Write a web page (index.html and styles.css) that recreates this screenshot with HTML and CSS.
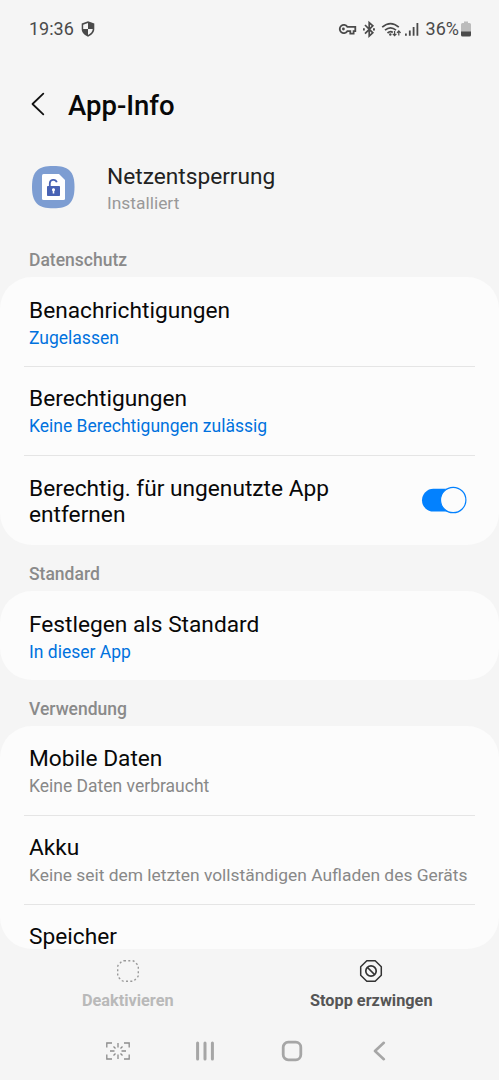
FILE: index.html
```html
<!DOCTYPE html>
<html lang="de">
<head>
<meta charset="utf-8">
<title>App-Info</title>
<link rel="stylesheet" href="styles.css">
</head>
<body>
<div class="screen">
  <header class="status">
    <span class="clock">19:36</span>
    <svg class="shield" width="14" height="16" viewBox="0 0 14 16"><path d="M7 .3 13.300 2.600V8c0 3.500-2.600 6.200-6.300 7.700C3.300 14.200.7 11.500.7 8V2.600Z" fill="#4a4a4a"/><path d="M7 2v6H2.200V3.700ZM7 8h4.800c-.3 2.500-2 4.700-4.800 6Z" fill="#f5f5f5"/></svg>
    <svg class="indicators" width="84" height="20" viewBox="0 0 84 20" fill="none" stroke="#4a4a4a">
      <path d="M9.300 7.800A4.100 4.100 0 1 0 9.300 12.200H12.300V14.600H15.600V12.200H17.300V7.800Z" stroke-width="1.800"/><circle cx="5.400" cy="10" r="1.400" fill="#4a4a4a" stroke="none"/>
      <path d="M27 6 34.800 13.800 31.200 17.100V3.700L34.800 6.900 27 14.700" stroke-width="1.700"/><path d="M25 10.300h1.800M35 10.300h1.900" stroke-width="2.200"/>
      <path d="M44.200 8.100Q52.500 1 60.800 8.100M47 11.100Q52.500 6.500 58 11.100M49.500 14Q52.500 11.500 54.800 13.500" stroke-width="1.700"/><circle cx="52.300" cy="15.500" r="1.200" fill="#4a4a4a" stroke="none"/><path d="M56.600 12v4.500M54.800 14.800l1.800 1.900 1.800-1.900M60.800 16.500V12M59 13.800l1.800-1.900 1.800 1.900" stroke-width="1.200"/>
      <path d="M67.900 14.500v2.200M71.800 11.500v5.200M75.600 8v8.700M79.400 4v12.700" stroke-width="1.800"/>
    </svg>
    <span class="percent">36%</span>
    <svg class="battery" width="10" height="16" viewBox="0 0 10 16"><path d="M3 .5h4V2h1.500q1.500 0 1.500 1.500V11H0V3.500Q0 2 1.500 2H3Z" fill="#bcbcbc"/><path d="M0 10.500h10V14q0 1.500-1.500 1.500h-7Q0 15.500 0 14Z" fill="#4a4a4a"/></svg>
  </header>

  <div class="titlebar">
    <svg width="14" height="24" viewBox="0 0 14 24"><path d="M12.300 1.700 1.500 12 12.300 22.300" fill="none" stroke="#111" stroke-width="1.800" stroke-linecap="round" stroke-linejoin="round"/></svg>
    <h1>App-Info</h1>
  </div>

  <section class="app">
    <svg width="44" height="44" viewBox="0 0 44 44"><path d="M22.300 1C37.800 1 43.500 6.500 43.500 22S37.800 43.300 22.300 43.300 1 37.500 1 22 6.800 1 22.300 1Z" fill="#7d9dd2"/><path d="M12.500 9H28l6 6v18.500q0 1.500-1.500 1.500h-20q-1.500 0-1.500-1.500v-23Q11 9 12.500 9Z" fill="#fff"/><path d="M18.800 21v-2.500a3.600 3.600 0 0 1 7-1.200" fill="none" stroke="#4862b4" stroke-width="1.800"/><rect x="16" y="21" width="13" height="10" rx=".8" fill="#4862b4"/><path d="M22.500 23.300a1.500 1.500 0 0 1 .8 2.800v2.500h-1.600v-2.500a1.500 1.500 0 0 1 .8-2.800Z" fill="#fff"/></svg>
    <div><div class="app-name">Netzentsperrung</div><div class="app-state">Installiert</div></div>
  </section>

  <main class="list">
    <h2>Datenschutz</h2>
    <section class="card">
      <div class="row"><div class="label">Benachrichtigungen</div><div class="sub link">Zugelassen</div></div>
      <div class="row"><div class="label">Berechtigungen</div><div class="sub link">Keine Berechtigungen zulässig</div></div>
      <div class="row switch-row"><div class="label">Berechtig. für ungenutzte App<br>entfernen</div>
        <svg width="46" height="28" viewBox="0 0 46 28"><rect x="1" y="2.800" width="40" height="22.800" rx="11.400" fill="#0381fe"/><circle cx="32.200" cy="14" r="12.700" fill="#fcfcfc" stroke="#0381fe" stroke-width="1.200"/></svg>
      </div>
    </section>
    <h2>Standard</h2>
    <section class="card">
      <div class="row"><div class="label">Festlegen als Standard</div><div class="sub link">In dieser App</div></div>
    </section>
    <h2>Verwendung</h2>
    <section class="card usage">
      <div class="row"><div class="label">Mobile Daten</div><div class="sub">Keine Daten verbraucht</div></div>
      <div class="row"><div class="label">Akku</div><div class="sub wide">Keine seit dem letzten vollständigen Aufladen des Geräts</div></div>
      <div class="row clipped"><div class="label">Speicher</div></div>
    </section>
  </main>

  <div class="actions">
    <div class="action disabled">
      <svg width="24" height="24" viewBox="0 0 24 24"><path d="M8 1.700h8q1.500 0 2.500 1l2.800 2.800q1 1 1 2.500v8q0 1.500-1 2.500l-2.800 2.800q-1 1-2.500 1H8q-1.500 0-2.500-1l-2.800-2.800q-1-1-1-2.500V8q0-1.500 1-2.500l2.800-2.800q1-1 2.500-1Z" fill="none" stroke="#999" stroke-width="1.400" stroke-dasharray="2 2.300"/></svg>
      <span>Deaktivieren</span>
    </div>
    <div class="action">
      <svg width="24" height="24" viewBox="0 0 24 24" fill="none" stroke="#333"><path d="M7.800 1.700h8.400l6.100 6.100v8.400l-6.100 6.100H7.800l-6.100-6.100V7.800Z" stroke-width="1.500" stroke-linejoin="round"/><circle cx="12" cy="12" r="5.200" stroke-width="1.700"/><path d="m8.500 8.500 7 7" stroke-width="1.700"/></svg>
      <span>Stopp erzwingen</span>
    </div>
  </div>

  <nav class="nav">
    <svg width="24" height="18" viewBox="0 0 24 18" fill="none" stroke="#8c8c8c" stroke-width="1.300"><path d="M.8 5.500V1H6M18 1h5.200v4.500M23.200 12.500V17H18M6 17H.8v-4.500M12 1v4.500M12 12.500V17M4 9h4.500M15.500 9H20M7.500 4.500l2 2M16.500 4.500l-2 2M7.500 13.500l2-2M16.500 13.500l-2-2"/></svg>
    <svg width="20" height="20" viewBox="0 0 20 20"><path d="M2.600 2v16M10 2v16M17.400 2v16" stroke="#a6a6a6" stroke-width="3" stroke-linecap="round"/></svg>
    <svg width="22" height="22" viewBox="0 0 22 22"><rect x="2.200" y="2.200" width="17.600" height="17.600" rx="5" fill="none" stroke="#a6a6a6" stroke-width="2.800"/></svg>
    <svg width="14" height="20" viewBox="0 0 14 20"><path d="M10.800 1.800 2 10l8.800 8.200" fill="none" stroke="#a6a6a6" stroke-width="2.600" stroke-linecap="round" stroke-linejoin="round"/></svg>
  </nav>
</div>
</body>
</html>
```
FILE: styles.css
```css
* { box-sizing: border-box; }
body { margin: 0; background: #f5f5f5; font-family: Roboto, "Liberation Sans", sans-serif; color: #080808; }
svg { display: block; flex: none; }
.screen { width: 499px; height: 1080px; display: flex; flex-direction: column; overflow: hidden; background: #f5f5f5; white-space: nowrap; }
.status { height: 58px; flex: none; display: flex; align-items: center; padding: 0 28px 0 29px; color: #4a4a4a; font-size: 18px; }
.clock { margin-top: -1px; }
.shield { margin-left: 7px; }
.indicators { margin-left: auto; }
.percent { margin: -1px 0 0 4px; }
.battery { margin-left: 2px; }
.titlebar { height: 92px; flex: none; display: flex; align-items: center; padding-left: 31px; gap: 23px; }
h1 { margin: 4px 0 0; font-size: 27.5px; font-weight: 500; line-height: 32px; }
.app { height: 87px; flex: none; display: flex; padding: 15px 0 0 31px; gap: 32px; }
.app-name { font-size: 22.7px; line-height: 26px; margin-top: -1px; color: #222; }
.app-state { font-size: 17.4px; line-height: 26px; color: #999; }
.list { height: 712px; flex: none; overflow: hidden; }
h2 { margin: 0; height: 46px; padding: 18px 29px 0; font-size: 17.5px; line-height: 22px; font-weight: 500; color: #8a8a8a; }
h2:first-child { height: 40px; padding-top: 12px; }
.card { background: #fcfcfc; border-radius: 32px; }
.row { height: 89px; margin: 0 24px; padding: 21px 5px 0; }
.row + .row { padding-top: 19px; border-top: 1.5px solid #e5e5e5; }
.label { font-size: 22.7px; line-height: 26px; }
.sub { font-size: 17.5px; line-height: 22px; margin-top: 3px; color: #888; }
.usage .row:first-child { padding-top: 20px; }
.sub.wide { font-size: 17.4px; }
.sub.link { color: #0072de; }
.row.switch-row { height: 90px; display: flex; justify-content: space-between; padding: 20px 8px 0 5px; }
.switch-row svg { margin-top: 10px; }
.row.clipped { height: 45px; }
.actions { height: 71px; flex: none; display: flex; padding: 10px 6px 0; }
.action { flex: 1; display: flex; flex-direction: column; align-items: center; gap: 7px; color: #555; font-size: 16.3px; line-height: 22px; font-weight: 700; }
.disabled { color: #b9b9b9; }
.nav { height: 60px; display: grid; grid-template-columns: repeat(4, 87.300px); align-items: center; justify-items: center; padding: 1px 0 0 74px; }
```
